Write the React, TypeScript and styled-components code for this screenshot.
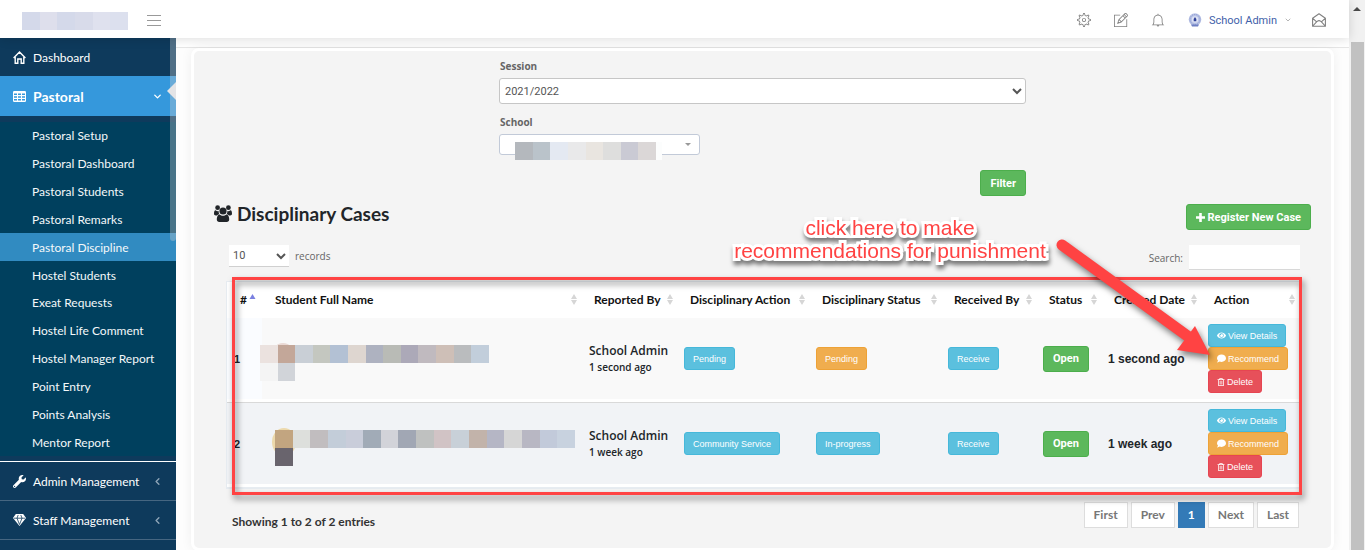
import React from 'react';
import styled, { createGlobalStyle } from 'styled-components';
import { FaWrench, FaEye, FaComment, FaRegTrashAlt } from 'react-icons/fa';
import { TfiSettings, TfiPencilAlt, TfiBell } from 'react-icons/tfi';
import { ChevronDown, ChevronLeft } from 'lucide-react';

const Global = createGlobalStyle`
  *, *::before, *::after { box-sizing: border-box; }
  body {
    margin: 0;
    background: #fff;
    color: #212529;
    font-family: Lato, "Open Sans", sans-serif;
    font-size: 12px;
  }
  button, select, input { font-family: inherit; margin: 0; }
  ul { list-style: none; margin: 0; padding: 0; }
  a { text-decoration: none; color: inherit; }
`;

/* ---------- page frame ---------- */

const Page = styled.div`
  display: grid;
  grid-template-columns: minmax(0, 1fr) 16px;
  min-height: 100vh;
`;

const Column = styled.div`
  display: flex;
  flex-direction: column;
  min-width: 0;
`;

const ScrollTrack = styled.div`
  display: flex;
  flex-direction: column;
  align-items: center;
  gap: 31px;
  padding-top: 7px;
  background: #f1f1f1;
`;

const ScrollArrow = styled.div`
  border: 4px solid transparent;
  border-top: 0;
  border-bottom-color: #4a4a4a;
`;

const ScrollThumb = styled.div`
  flex: 1;
  width: 13px;
  background: #c1c1c1;
`;

const Header = styled.header`
  position: relative;
  z-index: 2;
  display: flex;
  align-items: center;
  height: 38px;
  padding: 0 23px 0 22px;
  background: #fff;
  box-shadow: 0 1px 10px rgba(0, 0, 0, 0.14);
`;

const Blocks = styled.div<{ $w: number }>`
  display: flex;
  width: ${(p) => p.$w}px;
`;

const Block = styled.span<{ $c: string }>`
  flex: 1;
  height: 18px;
  background: ${(p) => p.$c};
`;

const IconButton = styled.button`
  display: flex;
  padding: 0;
  border: 0;
  background: none;
  color: #808080;
  cursor: pointer;
`;

const MenuButton = styled(IconButton)`
  margin: 2px auto 0 19px;
`;

const BrandBlocks = styled(Blocks)`
  margin-top: 4px;
`;

const HeaderTools = styled.div`
  display: flex;
  align-items: center;
  gap: 23px;
  padding-top: 2px;
`;

const UserLink = styled.a`
  display: flex;
  align-items: center;
  gap: 7px;
  margin-right: -3px;
  color: #3f5fa9;
  font-family: Roboto, sans-serif;
  font-size: 11px;

  svg:last-child { color: #b5b5b5; }
`;

const Body = styled.div`
  display: flex;
  flex: 1;
  align-items: stretch;
`;

/* ---------- side navigation ---------- */

const Sidebar = styled.nav`
  position: relative;
  flex: 0 0 176px;
  background: #0e3a5c;
  color: #fff;
`;

const NavLink = styled.a<{ $active?: boolean }>`
  display: flex;
  align-items: center;
  gap: 7px;
  height: ${(p) => (p.$active ? 40 : 38)}px;
  padding: 0 13px;
  background: ${(p) => (p.$active ? '#3598dc' : 'transparent')};
  font-size: ${(p) => (p.$active ? 14 : 12)}px;
  font-weight: ${(p) => (p.$active ? 700 : 400)};
  color: #fff;

  span { flex: 1; }
`;

const NavItem = styled.li<{ $line?: string }>`
  border-bottom: ${(p) => (p.$line ? `1px solid ${p.$line}` : '0')};
`;

const SubMenuWrap = styled.div`
  padding: 6px 0 5px;
`;

const SubMenu = styled.ul`
  display: grid;
  grid-auto-rows: 1fr;
  height: 334px;
  background: #00405e;
`;

const SubLink = styled.a<{ $active?: boolean }>`
  display: flex;
  align-items: center;
  height: 100%;
  padding-left: 32px;
  background: ${(p) => (p.$active ? '#318bc1' : 'transparent')};
  font-size: 12px;
  color: #f4f8fa;
`;

const NavScroll = styled.div`
  position: absolute;
  top: 0;
  right: 0;
  width: 6px;
  height: 203px;
  border-radius: 0 0 4px 4px;
  background: rgba(200, 205, 210, 0.36);
`;

const NavPointer = styled.div`
  position: absolute;
  top: 44px;
  right: 0;
  border: 9px solid transparent;
  border-left: 0;
  border-right-color: #e4e4e6;
`;

/* ---------- main panel ---------- */

const Main = styled.main`
  flex: 1;
  min-width: 0;
  background: #fdfdfd;
`;

const TopStrip = styled.div`
  height: 10px;
  border-bottom: 1px solid #e6e6e6;
  background: #fff;
`;

const Card = styled.section`
  margin: 0 15px;
  padding: 8px 20px 19px;
  border: 3px solid #fff;
  border-radius: 8px;
  background: #f4f4f4;
  box-shadow: 0 0 12px rgba(0, 0, 0, 0.06);
`;

const FilterForm = styled.form`
  display: flex;
  flex-direction: column;
  align-items: flex-start;
  max-width: 527px;
  margin: 0 auto;
`;

const FieldLabel = styled.label`
  height: 19px;
  padding-left: 1px;
  color: #666;
  font-family: "Open Sans", sans-serif;
  font-size: 10px;
  font-weight: 700;
  line-height: 14px;
`;

const SessionSelect = styled.select`
  width: 100%;
  height: 26px;
  margin-bottom: 11px;
  padding: 0 1px;
  border: 1px solid #c6c6c6;
  border-radius: 3px;
  background: #fff;
  color: #555;
  font-size: 11px;
  font-family: Roboto, sans-serif;
`;

const SchoolField = styled.div`
  position: relative;
  width: 201px;
  margin-bottom: 15px;
`;

const SchoolSelect = styled.select`
  display: block;
  width: 100%;
  height: 21px;
  appearance: none;
  border: 1px solid #c2cad8;
  border-radius: 3px;
  background: #fff;
`;

const SchoolCaret = styled.span`
  position: absolute;
  top: 9px;
  right: 9px;
  border: 3px solid transparent;
  border-bottom: 0;
  border-top-color: #999;
`;

const SchoolBlocks = styled(Blocks)`
  position: absolute;
  top: 8px;
  left: 16px;
  border-right: 6px solid #fcfdfd;
`;

const tones = {
  green: ['#5cb85c', '#4cae4c'],
  blue: ['#5bc0de', '#46b8da'],
  orange: ['#f0ad4e', '#eea236'],
  red: ['#e7505a', '#e64552'],
};

const Button = styled.button<{ $tone: keyof typeof tones; $small?: boolean }>`
  display: flex;
  align-items: center;
  gap: ${(p) => (p.$small ? 2 : 3)}px;
  height: ${(p) => (p.$small ? 23 : 26)}px;
  padding: 0 ${(p) => (p.$small ? 8 : 9)}px;
  border: 1px solid ${(p) => tones[p.$tone][1]};
  border-radius: 3px;
  background: ${(p) => tones[p.$tone][0]};
  color: #fff;
  font-family: ${(p) => (p.$small ? '"Liberation Sans", Arial' : 'Roboto')}, sans-serif;
  font-size: ${(p) => (p.$small ? 9 : 11)}px;
  font-weight: ${(p) => (p.$small ? 400 : 700)};
  white-space: nowrap;
  cursor: pointer;
`;

const FilterButton = styled(Button)`
  align-self: flex-end;
`;

const TitleRow = styled.div`
  display: flex;
  justify-content: space-between;
  margin-top: 8px;
`;

const Title = styled.h1`
  display: flex;
  align-items: center;
  gap: 5px;
  height: 18px;
  margin: 0;
  font-size: 19px;
  font-weight: 700;
`;

const TableTools = styled.div`
  display: flex;
  justify-content: space-between;
  align-items: flex-start;
  height: 36px;
  margin: 15px 11px 0 15px;
  color: #666;
  font-family: "Open Sans", sans-serif;
  font-size: 10px;
`;

const ToolLabel = styled.label`
  display: flex;
  align-items: center;
  gap: 6px;
`;

const LengthSelect = styled.select`
  width: 60px;
  height: 22px;
  padding: 0;
  border: 0;
  border-bottom: 1px solid #d0d0d0;
  background: #fff;
  color: #555;
  font-family: Roboto, sans-serif;
  font-size: 11px;
`;

const SearchInput = styled.input`
  width: 111px;
  height: 25px;
  border: 0;
  border-bottom: 1px solid #d8d8d8;
  background: #fff;
`;

const TableArea = styled.div`
  position: relative;
  margin: 0 10px 0 12px;
`;

const Table = styled.table`
  width: 100%;
  table-layout: fixed;
  border-collapse: separate;
  border-spacing: 0;
  border-left: 1px solid #e7ecf1;
  border-bottom: 2px solid #e7ecf1;
  background: #fff;
`;

const Th = styled.th<{ $w?: number; $pad: number }>`
  width: ${(p) => (p.$w ? `${p.$w}px` : 'auto')};
  height: 36px;
  padding: 0 6px 0 ${(p) => p.$pad}px;
  border-top: 1px solid #e7ecf1;
  color: #111;
  font-size: 12px;
  font-weight: 700;
  text-align: left;
  white-space: nowrap;
`;

const HeadCell = styled.div`
  display: flex;
  align-items: center;
  justify-content: space-between;
`;

const Td = styled.td<{ $alt?: boolean; $first?: boolean }>`
  height: 85px;
  padding: 0 0 0 ${(p) => (p.$first ? 7 : 5)}px;
  border-top: 1px solid ${(p) => (p.$alt ? '#d9d9d9' : '#fff')};
  border-bottom: 3px solid #fff;
  background: ${(p) => (p.$alt ? '#f1f3f6' : p.$first ? '#fafcff' : '#f9f9f9')};
  font-family: "Liberation Sans", sans-serif;
  font-size: ${(p) => (p.$first ? 11 : 12)}px;
  font-weight: 700;
  vertical-align: middle;
`;

const Reporter = styled.div`
  padding-left: 1px;
  font-family: "Open Sans", sans-serif;
  font-size: 12px;
  font-weight: 600;
  line-height: 16px;

  small { display: block; font-size: 10px; }
`;

const Person = styled.div<{ $indent: number }>`
  position: relative;
  margin-left: ${(p) => p.$indent}px;
  padding-top: 9px;
`;

const Avatar = styled.span<{ $c: string; $x: number }>`
  position: absolute;
  top: 7px;
  left: ${(p) => p.$x}px;
  width: 24px;
  height: 28px;
  border-radius: 50%;
  background: ${(p) => p.$c};
`;

const PersonBlocks = styled(Blocks)`
  position: relative;
`;

const Actions = styled.div`
  display: flex;
  flex-direction: column;
  align-items: flex-start;
`;

const Foot = styled.div`
  display: flex;
  justify-content: space-between;
  align-items: flex-start;
  margin: 13px 12px 0 18px;
`;

const Info = styled.div`
  padding-top: 12px;
  color: #333;
  font-size: 12px;
  font-weight: 700;
`;

const Pager = styled.div`
  display: flex;
  gap: 3px;
`;

const PageLink = styled.a<{ $on?: boolean }>`
  height: 26px;
  padding: 0 9px;
  border: 1px solid ${(p) => (p.$on ? '#337ab7' : '#ddd')};
  background: ${(p) => (p.$on ? '#337ab7' : '#fff')};
  color: ${(p) => (p.$on ? '#fff' : '#777')};
  font-size: 12px;
  font-weight: 700;
  line-height: 23px;
`;

/* ---------- annotation over the table ---------- */

const Frame = styled.div`
  position: absolute;
  inset: -4px -1px -6px 6px;
  border: 3px solid #ff4343;
  filter: drop-shadow(2px 4px 3px rgba(0, 0, 0, 0.5));
  pointer-events: none;
`;

const Note = styled.p`
  position: absolute;
  top: -65px;
  right: 251px;
  width: 320px;
  margin: 0;
  color: #ff4343;
  font-family: "Liberation Sans", Arial, sans-serif;
  font-size: 21px;
  line-height: 23px;
  text-align: center;
  white-space: nowrap;
  -webkit-text-stroke: 6px #fff;
  paint-order: stroke fill;
  filter: drop-shadow(1px 4px 2px rgba(0, 0, 0, 0.5));
  pointer-events: none;
`;

const Arrow = styled.svg`
  position: absolute;
  top: -46px;
  right: 86px;
  overflow: visible;
  filter: drop-shadow(2px 4px 3px rgba(0, 0, 0, 0.5));
  pointer-events: none;
`;

/* ---------- drawings ---------- */

const MenuIcon = () => (
  <svg width="14" height="11" viewBox="0 0 14 11" stroke="#999" shapeRendering="crispEdges">
    <path d="M0 .5h14M0 5.5h14M0 10.5h14" />
  </svg>
);

const HomeIcon = () => (
  <svg width="13" height="13" viewBox="0 0 13 13" fill="none" stroke="#fff" strokeWidth="1.4">
    <path d="M.6 7 6.5 1l5.900 6M2.200 6v6.200h2.600V8h3.400v4.200h2.600V6" />
  </svg>
);

const GridIcon = () => (
  <svg width="13" height="11" viewBox="0 0 13 11">
    <rect width="13" height="11" rx="1.200" fill="#fff" />
    <path
      d="M1 2.400h3v1.600H1zM5 2.400h3v1.600H5zM9 2.400h3v1.600H9zM1 5.200h3v1.600H1zM5 5.200h3v1.600H5zM9 5.200h3v1.600H9zM1 8h3v1.600H1zM5 8h3v1.600H5zM9 8h3v1.600H9z"
      fill="#3598dc"
    />
  </svg>
);

const DiamondIcon = () => (
  <svg width="13" height="12" viewBox="0 0 13 12">
    <path d="M2.800 0h7.400L13 4 6.500 12 0 4z" fill="#fff" />
    <path d="M1 4.200h11M4 4.200 6.500 10.500 9 4.200M4 4.200 5.200 1M9 4.200 7.800 1" fill="none" stroke="#0e3a5c" strokeWidth=".8" />
  </svg>
);

const UsersIcon = () => (
  <svg width="18" height="17" viewBox="0 0 18 17" fill="#212529">
    <circle cx="3.600" cy="2.700" r="2.400" />
    <circle cx="14.400" cy="2.700" r="2.400" />
    <path d="M1.600 5.300c1.200 1 2.700 1 3.200.6-.3 1.400 0 2.500.7 3.300-1 0-1.800.4-2.400 1.200H1.800C.7 10.400 0 9.800 0 8.800 0 7 .4 5.300 1.600 5.300z" />
    <path d="M16.400 5.300c-1.200 1-2.700 1-3.200.6.3 1.400 0 2.500-.7 3.300 1 0 1.800.4 2.400 1.200h1.300c1.100 0 1.800-.6 1.800-1.600 0-1.800-.4-3.500-1.600-3.500z" />
    <circle cx="9" cy="6" r="3.600" />
    <path d="M5.600 9.500c1 .9 2.200 1.300 3.400 1.300s2.400-.4 3.400-1.300c2.100.1 2.800 2.600 2.800 5 0 1.500-1 2.500-2.500 2.500H5.300c-1.500 0-2.500-1-2.500-2.500 0-2.400.7-4.900 2.800-5z" />
  </svg>
);

const PlusIcon = () => (
  <svg width="9" height="9" viewBox="0 0 9 9" fill="none" stroke="#fff" strokeWidth="2.600">
    <path d="M4.500 0v9M0 4.500h9" />
  </svg>
);

const MailIcon = () => (
  <svg width="14" height="14" viewBox="0 0 14 14" fill="none" stroke="#808080" strokeWidth="1.100" strokeLinejoin="round">
    <path d="M.6 5.200 7 .8l6.400 4.400v8H.6zM.8 5.400 4.600 8.800M13.200 5.400 9.400 8.800M.8 13 4.800 8.600 7 7.600l2.200 1 4 4.400" />
  </svg>
);

const CrestIcon = () => (
  <svg width="14" height="14" viewBox="0 0 14 14">
    <circle cx="7" cy="6.500" r="6.300" fill="#b9c3e6" />
    <circle cx="7" cy="6.500" r="5" fill="none" stroke="#8c9bd2" strokeDasharray="1.200 1" />
    <circle cx="7" cy="6.500" r="3.200" fill="#dfe4f5" />
    <path d="M7 4 8.300 6v2.200H5.700V6z" fill="#2d3f97" />
    <path d="M3 11.500h8l-1 2H4z" fill="#6f80c4" />
  </svg>
);

const SortIcon = ({ asc }: { asc?: boolean }) =>
  asc ? (
    <svg width="7" height="11" viewBox="0 0 7 11">
      <path d="M3.500 0 6.500 5h-6z" fill="#7a80e0" />
    </svg>
  ) : (
    <svg width="6" height="11" viewBox="0 0 6 11" fill="#d6d6d6">
      <path d="M3 0 6 5H0zM3 11 6 6H0z" />
    </svg>
  );

/* ---------- data ---------- */

const brand = ['#d4d9ea', '#dedfec', '#d4d9ea', '#d8dbea', '#dfe1ee', '#dce0ee'];
const school = ['#b4b8bd', '#bac3ca', '#e4e9f2', '#e9e9ea', '#e9e5e0', '#dededd', '#cacad4', '#dbd7d7'];

const people = [
  {
    indent: -7,
    width: 229,
    avatar: '#ead9d4',
    avatarX: 11,
    top: ['#ebe2df', '#c3a799', '#c9cfd6', '#c4c7c0', '#b3c1d4', '#ded6d0', '#aeb2c0', '#b9bbb6', '#aca9b8', '#c0babf', '#cebfb7', '#babcbe', '#c2cedb'],
    bottom: ['#f4f4f4', '#d1d4d9'],
  },
  {
    indent: 8,
    width: 300,
    avatar: '#ecd9ac',
    avatarX: -3,
    top: ['#c2a580', '#dddfdc', '#c1bdbf', '#c3cdd9', '#c9cdda', '#a1abb7', '#d2d3d9', '#a1a7b4', '#bfc1c0', '#d1c3c5', '#c8d0d8', '#c2b3aa', '#b5b6c5', '#d6d6d6', '#b8b7c3', '#c2cada', '#c8d2df'],
    bottom: ['#69646d'],
  },
];

const CasePerson = ({ row }: { row: number }) => {
  const c = people[row];
  return (
    <Person $indent={c.indent}>
      <Avatar $c={c.avatar} $x={c.avatarX} />
      <PersonBlocks $w={c.width}>{c.top.map((t, i) => <Block key={i} $c={t} />)}</PersonBlocks>
      <PersonBlocks $w={c.bottom.length > 1 ? 35 : 18}>{c.bottom.map((t, i) => <Block key={i} $c={t} />)}</PersonBlocks>
    </Person>
  );
};

const subItems = [
  'Pastoral Setup', 'Pastoral Dashboard', 'Pastoral Students', 'Pastoral Remarks',
  'Pastoral Discipline', 'Hostel Students', 'Exeat Requests', 'Hostel Life Comment',
  'Hostel Manager Report', 'Point Entry', 'Points Analysis', 'Mentor Report',
];

const columns: [string, number?][] = [
  ['#', 35], ['Student Full Name'], ['Reported By', 96], ['Disciplinary Action', 132],
  ['Disciplinary Status', 132], ['Received By', 95], ['Status', 65], ['Created Date', 100], ['Action', 98],
];

const cases: { when: string; action: string; status: string; tone: keyof typeof tones }[] = [
  { when: '1 second ago', action: 'Pending', status: 'Pending', tone: 'orange' },
  { when: '1 week ago', action: 'Community Service', status: 'In-progress', tone: 'blue' },
];

export default function App() {
  return (
    <Page>
      <Global />
      <Column>
        <Header>
          <BrandBlocks $w={106}>{brand.map((c, i) => <Block key={i} $c={c} />)}</BrandBlocks>
          <MenuButton aria-label="Toggle menu"><MenuIcon /></MenuButton>
          <HeaderTools>
            <IconButton aria-label="Settings"><TfiSettings size={14} /></IconButton>
            <IconButton aria-label="Edit"><TfiPencilAlt size={14} /></IconButton>
            <IconButton aria-label="Notifications"><TfiBell size={14} /></IconButton>
            <UserLink href="#user">
              <CrestIcon />
              School Admin
              <ChevronDown size={8} strokeWidth={3} />
            </UserLink>
            <IconButton aria-label="Messages"><MailIcon /></IconButton>
          </HeaderTools>
        </Header>
        <Body>
          <Sidebar>
            <ul>
              <NavItem>
                <NavLink href="#dashboard"><HomeIcon /><span>Dashboard</span></NavLink>
              </NavItem>
              <NavItem $line="#fff">
                <NavLink href="#pastoral" $active>
                  <GridIcon /><span>Pastoral</span><ChevronDown size={11} strokeWidth={3} />
                </NavLink>
                <SubMenuWrap>
                  <SubMenu>
                    {subItems.map((s) => (
                      <li key={s}>
                        <SubLink href="#pastoral" $active={s === 'Pastoral Discipline'}>{s}</SubLink>
                      </li>
                    ))}
                  </SubMenu>
                </SubMenuWrap>
              </NavItem>
              <NavItem $line="#466681">
                <NavLink href="#admin">
                  <FaWrench size={13} /><span>Admin Management</span><ChevronLeft size={11} strokeWidth={3} color="#8fa5b8" />
                </NavLink>
              </NavItem>
              <NavItem $line="#466681">
                <NavLink href="#staff">
                  <DiamondIcon /><span>Staff Management</span><ChevronLeft size={11} strokeWidth={3} color="#8fa5b8" />
                </NavLink>
              </NavItem>
            </ul>
            <NavScroll />
            <NavPointer />
          </Sidebar>
          <Main>
            <TopStrip />
            <Card>
              <FilterForm onSubmit={(e) => e.preventDefault()}>
                <FieldLabel htmlFor="session">Session</FieldLabel>
                <SessionSelect id="session"><option>2021/2022</option></SessionSelect>
                <FieldLabel htmlFor="school">School</FieldLabel>
                <SchoolField>
                  <SchoolSelect id="school" />
                  <SchoolCaret />
                  <SchoolBlocks $w={147}>{school.map((c, i) => <Block key={i} $c={c} />)}</SchoolBlocks>
                </SchoolField>
                <FilterButton $tone="green">Filter</FilterButton>
              </FilterForm>
              <TitleRow>
                <Title><UsersIcon />Disciplinary Cases</Title>
                <Button $tone="green"><PlusIcon />Register New Case</Button>
              </TitleRow>
              <TableTools>
                <ToolLabel>
                  <LengthSelect><option>10</option></LengthSelect>
                  records
                </ToolLabel>
                <ToolLabel>
                  Search:
                  <SearchInput type="search" />
                </ToolLabel>
              </TableTools>
              <TableArea>
                <Table>
                  <thead>
                    <tr>
                      {columns.map(([name, w], i) => (
                        <Th key={name} $w={w} $pad={i < 2 ? 13 : 11}>
                          <HeadCell>{name}<SortIcon asc={i === 0} /></HeadCell>
                        </Th>
                      ))}
                    </tr>
                  </thead>
                  <tbody>
                    {cases.map((c, i) => {
                      const alt = i === 1;
                      return (
                        <tr key={c.when}>
                          <Td $alt={alt} $first>{i + 1}</Td>
                          <Td $alt={alt}><CasePerson row={i} /></Td>
                          <Td $alt={alt}><Reporter>School Admin<small>{c.when}</small></Reporter></Td>
                          <Td $alt={alt}><Button $small $tone="blue">{c.action}</Button></Td>
                          <Td $alt={alt}><Button $small $tone={c.tone}>{c.status}</Button></Td>
                          <Td $alt={alt}><Button $small $tone="blue">Receive</Button></Td>
                          <Td $alt={alt}><Button $tone="green">Open</Button></Td>
                          <Td $alt={alt}>{c.when}</Td>
                          <Td $alt={alt}>
                            <Actions>
                              <Button $small $tone="blue"><FaEye size={9} />View Details</Button>
                              <Button $small $tone="orange"><FaComment size={9} />Recommend</Button>
                              <Button $small $tone="red"><FaRegTrashAlt size={8} />Delete</Button>
                            </Actions>
                          </Td>
                        </tr>
                      );
                    })}
                  </tbody>
                </Table>
                <Frame />
                <Note>click here to make<br />recommendations for punishment</Note>
                <Arrow width="160" height="126" viewBox="1055 235 160 126" fill="#ff4343">
                  <path d="M1062 245 1193 340" stroke="#ff4343" strokeWidth="11" strokeLinecap="round" />
                  <path d="M1210 355 1177 350 1195 326z" />
                </Arrow>
              </TableArea>
              <Foot>
                <Info>Showing 1 to 2 of 2 entries</Info>
                <Pager>
                  <PageLink href="#first">First</PageLink>
                  <PageLink href="#prev">Prev</PageLink>
                  <PageLink href="#1" $on>1</PageLink>
                  <PageLink href="#next">Next</PageLink>
                  <PageLink href="#last">Last</PageLink>
                </Pager>
              </Foot>
            </Card>
          </Main>
        </Body>
      </Column>
      <ScrollTrack><ScrollArrow /><ScrollThumb /></ScrollTrack>
    </Page>
  );
}
